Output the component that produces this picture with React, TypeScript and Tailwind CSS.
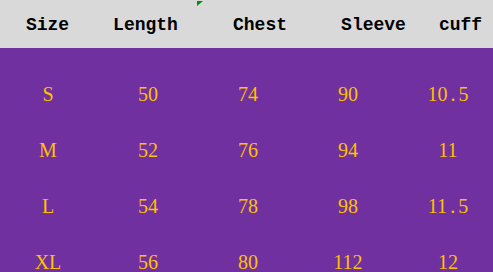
import React from 'react';

const headers = [
  { label: 'Size' },
  { label: 'Length' },
  { label: 'Chest' },
  { label: 'Sleeve' },
  { label: 'cuff' },
];

const rows = [
  ['S', '50', '74', '90', '10.5'],
  ['M', '52', '76', '94', '11'],
  ['L', '54', '78', '98', '11.5'],
  ['XL', '56', '80', '112', '12'],
];

// decimal point in the source font is wide, pad it out a bit
const Cell = ({ value }: { value: string }) => {
  const dot = value.indexOf('.');
  if (dot < 0) return <>{value}</>;
  return (
    <>
      {value.slice(0, dot)}
      <span className="mx-[3px]">.</span>
      {value.slice(dot + 1)}
    </>
  );
};

export default function App(): React.JSX.Element {
  return (
    <div className="w-[493px] h-[272px] overflow-hidden bg-[#7030a0]">
      {/* header row */}
      <div className="relative h-[48px] bg-[#d9d9d9] grid grid-cols-[95px_101px_128px_99px_75px] items-center text-black font-bold text-[18px] [font-family:'Liberation_Mono',monospace]">
        {headers.map(h => (
          <div key={h.label} className="text-center leading-none pt-[2px]">{h.label}</div>
        ))}
        <svg className="absolute left-[197px] top-[1px]" width="6" height="5" viewBox="0 0 6 5">
          <polygon points="0,0 6,0 0,5" fill="#0a8a0a" />
        </svg>
      </div>
      {/* body */}
      <div className="pt-[18px] w-[500px] -ml-[2px] text-[#ffc000] text-[20px] [font-family:'Liberation_Serif',serif]">
        {rows.map(row => (
          <div key={row[0]} className="grid grid-cols-5 h-[56px] items-center">
            {row.map((cell, i) => (
              <div key={i} className="text-center leading-none">
                <Cell value={cell} />
              </div>
            ))}
          </div>
        ))}
      </div>
    </div>
  );
}
